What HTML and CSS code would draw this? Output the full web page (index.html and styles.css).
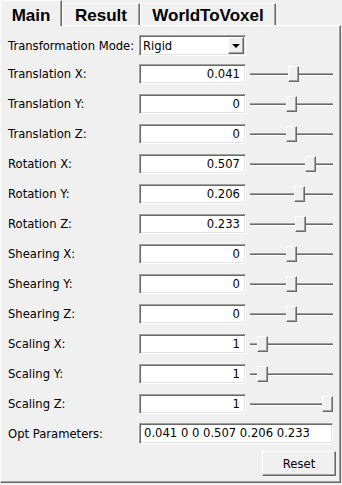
FILE: index.html
```html
<!DOCTYPE html>
<html lang="en">
<head>
  <meta charset="UTF-8" />
  <title>Transformation</title>
  <link rel="stylesheet" href="styles.css">
</head>
<body>
  <div class="tabs">
    <div class="tab tab-main selected">Main</div>
    <div class="tab tab-result">Result</div>
    <div class="tab tab-world">WorldToVoxel</div>
  </div>

  <div class="panel">
    <div class="row row-combo">
      <label>Transformation Mode:</label>
      <div class="combo">
        <span class="combo-text">Rigid</span>
        <span class="combo-btn"><span class="arrow"></span></span>
      </div>
    </div>

    <div class="row row-first">
      <label>Translation X:</label>
      <div class="entry">0.041</div>
      <div class="slider"><div class="groove"></div><div class="thumb" style="left: 38px"></div></div>
    </div>
    <div class="row">
      <label>Translation Y:</label>
      <div class="entry">0</div>
      <div class="slider"><div class="groove"></div><div class="thumb" style="left: 36px"></div></div>
    </div>
    <div class="row">
      <label>Translation Z:</label>
      <div class="entry">0</div>
      <div class="slider"><div class="groove"></div><div class="thumb" style="left: 36px"></div></div>
    </div>
    <div class="row">
      <label>Rotation X:</label>
      <div class="entry">0.507</div>
      <div class="slider"><div class="groove"></div><div class="thumb" style="left: 55px"></div></div>
    </div>
    <div class="row">
      <label>Rotation Y:</label>
      <div class="entry">0.206</div>
      <div class="slider"><div class="groove"></div><div class="thumb" style="left: 44px"></div></div>
    </div>
    <div class="row">
      <label>Rotation Z:</label>
      <div class="entry">0.233</div>
      <div class="slider"><div class="groove"></div><div class="thumb" style="left: 45px"></div></div>
    </div>
    <div class="row">
      <label>Shearing X:</label>
      <div class="entry">0</div>
      <div class="slider"><div class="groove"></div><div class="thumb" style="left: 36px"></div></div>
    </div>
    <div class="row">
      <label>Shearing Y:</label>
      <div class="entry">0</div>
      <div class="slider"><div class="groove"></div><div class="thumb" style="left: 36px"></div></div>
    </div>
    <div class="row">
      <label>Shearing Z:</label>
      <div class="entry">0</div>
      <div class="slider"><div class="groove"></div><div class="thumb" style="left: 36px"></div></div>
    </div>
    <div class="row">
      <label>Scaling X:</label>
      <div class="entry">1</div>
      <div class="slider"><div class="groove"></div><div class="thumb" style="left: 7px"></div></div>
    </div>
    <div class="row">
      <label>Scaling Y:</label>
      <div class="entry">1</div>
      <div class="slider"><div class="groove"></div><div class="thumb" style="left: 7px"></div></div>
    </div>
    <div class="row">
      <label>Scaling Z:</label>
      <div class="entry">1</div>
      <div class="slider"><div class="groove"></div><div class="thumb" style="left: 72px"></div></div>
    </div>

    <div class="row row-opt">
      <label>Opt Parameters:</label>
      <div class="entry entry-wide">0.041 0 0 0.507 0.206 0.233</div>
    </div>

    <div class="actions">
      <button class="btn">Reset</button>
    </div>
  </div>
</body>
</html>
```

FILE: styles.css
```css
body {
  margin: 0;
  width: 342px;
  height: 485px;
  overflow: hidden;
  background: #f0f0f0;
  font-family: "DejaVu Sans", Verdana, sans-serif;
  font-size: 11.6px;
  color: #000;
}

/* tab strip */
.tabs {
  display: flex;
  align-items: flex-end;
  height: 25px;
}

.tab {
  box-sizing: border-box;
  height: 22px;
  padding-top: 3px;
  text-align: center;
  font-family: "Liberation Sans", Arial, sans-serif;
  font-weight: bold;
  font-size: 17px;
  line-height: 17px;
  border-top: 1px solid #fff;
  border-left: 1px solid #fff;
  border-right: 1px solid #696969;
  box-shadow: inset -1px 0 0 #a0a0a0;
}

.tab.selected {
  position: relative;
  height: 26px;
  margin-bottom: -1px;
  padding-top: 6px;
  background: #f0f0f0;
  z-index: 1;
}

.tab-main { width: 62px; }
.tab-result { width: 78px; }
.tab-world { width: 136px; }

/* page panel */
.panel {
  box-sizing: border-box;
  width: 341px;
  height: 458px;
  padding: 9px 0 0 7px;
  border-top: 1px solid #fff;
  border-left: 1px solid #fff;
  border-right: 1px solid #696969;
  border-bottom: 1px solid #696969;
  box-shadow: inset -1px -1px 0 #a0a0a0;
  display: flex;
  flex-direction: column;
}

.row {
  display: flex;
  align-items: center;
  height: 20px;
  margin-top: 10px;
}

.row label {
  width: 131px;
  flex: none;
}

.row-combo {
  height: 21px;
  margin-top: 0;
}

.row-first {
  margin-top: 8px;
}

.row-opt {
  height: 21px;
  margin-top: 9px;
}

/* sunken entry */
.entry {
  box-sizing: border-box;
  width: 107px;
  height: 20px;
  padding-right: 5px;
  line-height: 18px;
  text-align: right;
  background: #fff;
  border: 1px solid;
  border-color: #a0a0a0 #fff #fff #a0a0a0;
  box-shadow: inset 1px 1px 0 #696969, inset -1px -1px 0 #e3e3e3;
}

.entry-wide {
  width: 194px;
  height: 21px;
  line-height: 19px;
  text-align: left;
  padding-left: 4px;
}

/* combobox */
.combo {
  box-sizing: border-box;
  width: 107px;
  height: 21px;
  display: flex;
  align-items: center;
  background: #fff;
  border: 1px solid;
  border-color: #a0a0a0 #fff #fff #a0a0a0;
  box-shadow: inset 1px 1px 0 #696969, inset -1px -1px 0 #e3e3e3;
}

.combo-text {
  flex: 1;
  padding-left: 3px;
}

.combo-btn {
  box-sizing: border-box;
  width: 16px;
  height: 17px;
  margin-right: 1px;
  display: flex;
  align-items: center;
  justify-content: center;
  background: #f0f0f0;
  border: 1px solid;
  border-color: #fff #696969 #696969 #fff;
  box-shadow: inset -1px -1px 0 #a0a0a0;
}

.arrow {
  width: 0;
  height: 0;
  border-left: 4px solid transparent;
  border-right: 4px solid transparent;
  border-top: 4px solid #000;
}

/* trackbar */
.slider {
  position: relative;
  width: 83px;
  height: 20px;
  margin-left: 4px;
}

.groove {
  position: absolute;
  left: 0;
  right: 0;
  top: 9px;
  height: 1px;
  background: #696969;
  border-top: 1px solid #a0a0a0;
  border-bottom: 1px solid #fff;
}

.thumb {
  position: absolute;
  top: 2px;
  box-sizing: border-box;
  width: 11px;
  height: 16px;
  background: #f0f0f0;
  border: 1px solid;
  border-color: #fff #696969 #696969 #fff;
  box-shadow: inset -1px -1px 0 #a0a0a0;
}

/* buttons */
.actions {
  display: flex;
  justify-content: flex-end;
  margin-top: 7px;
  padding-right: 4px;
}

.btn {
  box-sizing: border-box;
  width: 74px;
  height: 25px;
  padding: 0;
  font-family: "DejaVu Sans", Verdana, sans-serif;
  font-size: 11.6px;
  color: #000;
  background: #f0f0f0;
  border: 1px solid;
  border-color: #fff #696969 #696969 #fff;
  box-shadow: inset -1px -1px 0 #a0a0a0;
}
```
